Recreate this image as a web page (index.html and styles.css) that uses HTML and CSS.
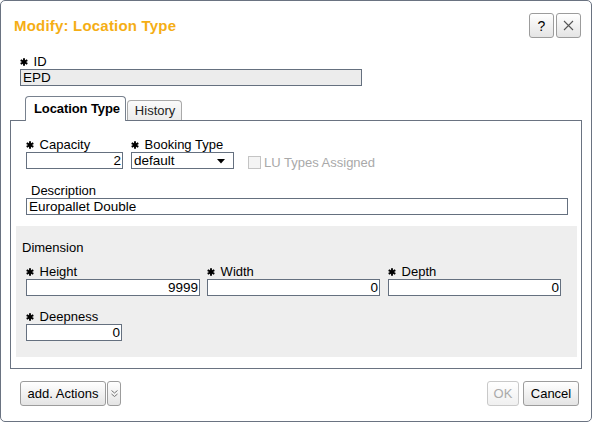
FILE: index.html
```html
<!DOCTYPE html>
<html>
<head>
<meta charset="utf-8">
<link rel="stylesheet" href="styles.css">
</head>
<body>
<div class="dialog">
  <div class="header">
    <div class="title">Modify: Location Type</div>
    <div class="hbtns">
      <button class="btn hbtn">?</button>
      <button class="btn hbtn"><svg width="11" height="11" viewBox="0 0 11 11"><path d="M1 1L10 10M10 1L1 10" stroke="#555" stroke-width="1.1"/></svg></button>
    </div>
  </div>
  <div class="body">
    <div class="idfield">
      <div class="label"><svg class="star" width="8" height="8" viewBox="0 0 8 8"><g stroke="#000" stroke-width="1.9"><path d="M4 0.2V7.8"/><path d="M0.7 2.1L7.3 5.9"/><path d="M0.7 5.9L7.3 2.1"/></g></svg> ID</div>
      <div class="input ro idinput">EPD</div>
    </div>
    <div class="tabs">
      <div class="tab active">Location Type</div>
      <div class="tab">History</div>
    </div>
    <div class="panel">
      <div class="row1">
        <div class="field">
          <div class="label"><svg class="star" width="8" height="8" viewBox="0 0 8 8"><g stroke="#000" stroke-width="1.9"><path d="M4 0.2V7.8"/><path d="M0.7 2.1L7.3 5.9"/><path d="M0.7 5.9L7.3 2.1"/></g></svg> Capacity</div>
          <div class="input num w-cap">2</div>
        </div>
        <div class="field">
          <div class="label"><svg class="star" width="8" height="8" viewBox="0 0 8 8"><g stroke="#000" stroke-width="1.9"><path d="M4 0.2V7.8"/><path d="M0.7 2.1L7.3 5.9"/><path d="M0.7 5.9L7.3 2.1"/></g></svg> Booking Type</div>
          <div class="input select">default<svg class="arrow" width="8" height="5" viewBox="0 0 8 5"><path d="M0 0H8L4 4.5Z" fill="#000"/></svg></div>
        </div>
        <div class="check">
          <span class="box"></span><span>LU Types Assigned</span>
        </div>
      </div>
      <div class="desc">
        <div class="label plain">Description</div>
        <div class="input descinput">Europallet Double</div>
      </div>
      <div class="dimension">
        <div class="label dimlabel">Dimension</div>
        <div class="dimrow">
          <div class="field">
            <div class="label"><svg class="star" width="8" height="8" viewBox="0 0 8 8"><g stroke="#000" stroke-width="1.9"><path d="M4 0.2V7.8"/><path d="M0.7 2.1L7.3 5.9"/><path d="M0.7 5.9L7.3 2.1"/></g></svg> Height</div>
            <div class="input num w-h">9999</div>
          </div>
          <div class="field f-width">
            <div class="label"><svg class="star" width="8" height="8" viewBox="0 0 8 8"><g stroke="#000" stroke-width="1.9"><path d="M4 0.2V7.8"/><path d="M0.7 2.1L7.3 5.9"/><path d="M0.7 5.9L7.3 2.1"/></g></svg> Width</div>
            <div class="input num w-w">0</div>
          </div>
          <div class="field f-depth">
            <div class="label"><svg class="star" width="8" height="8" viewBox="0 0 8 8"><g stroke="#000" stroke-width="1.9"><path d="M4 0.2V7.8"/><path d="M0.7 2.1L7.3 5.9"/><path d="M0.7 5.9L7.3 2.1"/></g></svg> Depth</div>
            <div class="input num w-w">0</div>
          </div>
        </div>
        <div class="dimrow second">
          <div class="field">
            <div class="label"><svg class="star" width="8" height="8" viewBox="0 0 8 8"><g stroke="#000" stroke-width="1.9"><path d="M4 0.2V7.8"/><path d="M0.7 2.1L7.3 5.9"/><path d="M0.7 5.9L7.3 2.1"/></g></svg> Deepness</div>
            <div class="input num w-deep">0</div>
          </div>
        </div>
      </div>
    </div>
  </div>
  <div class="footer">
    <div class="fleft">
      <button class="btn fbtn b-add">add. Actions</button>
      <button class="btn ddbtn"><svg width="7" height="9" viewBox="0 0 7 9"><path d="M0.5 1.5L3.5 4L6.5 1.5M0.5 5L3.5 7.5L6.5 5" fill="none" stroke="#666" stroke-width="0.9"/></svg></button>
    </div>
    <div class="fright">
      <button class="btn fbtn disabled">OK</button>
      <button class="btn fbtn b-cancel">Cancel</button>
    </div>
  </div>
</div>
</body>
</html>
```

FILE: styles.css
```css
html, body {
  margin: 0;
  padding: 0;
  background: #ffffff;
}
body {
  font-family: "Liberation Sans", Arial, sans-serif;
  font-size: 13px;
  color: #000;
}
.dialog {
  width: 592px;
  height: 422px;
  box-sizing: border-box;
  border: 1px solid #6a7381;
  border-radius: 5px;
  background: #fff;
  display: flex;
  flex-direction: column;
}
.header {
  display: flex;
  align-items: center;
  justify-content: space-between;
  padding: 12px 10px 0 13px;
  height: 25px;
}
.title {
  font-size: 15px;
  font-weight: bold;
  color: #f5ae15;
  line-height: 18px;
  letter-spacing: 0.2px;
}
.hbtns {
  display: flex;
  gap: 2px;
}
.btn {
  font-family: "Liberation Sans", Arial, sans-serif;
  font-size: 13px;
  color: #000;
  background: linear-gradient(#ffffff, #e4e4e4);
  border: 1px solid #9c9c9c;
  border-radius: 3px;
  padding: 0;
  margin: 0;
  box-sizing: border-box;
  display: flex;
  align-items: center;
  justify-content: center;
}
.hbtn {
  width: 25px;
  height: 25px;
  font-size: 14px;
}
.body {
  padding: 0 9px;
  flex: 1;
}
.label {
  line-height: 15px;
  height: 15px;
  white-space: nowrap;
}
.star {
  display: inline-block;
  vertical-align: 0px;
  margin-right: 2px;
}
.idfield {
  margin: 16px 0 0 10px;
}
.input {
  box-sizing: border-box;
  height: 17px;
  border: 1px solid #65707f;
  background: #fff;
  line-height: 15px;
  padding: 0 2px;
  white-space: nowrap;
  font-size: 13.5px;
}
.input.ro {
  background: #ececec;
}
.idinput {
  width: 342px;
}
.tabs {
  display: flex;
  align-items: flex-end;
  margin: 10px 0 0 15px;
  height: 24px;
  position: relative;
  z-index: 1;
}
.tab {
  box-sizing: border-box;
  height: 20px;
  padding: 0 6px 0 7px;
  line-height: 20px;
  border: 1px solid #a9a9a9;
  border-bottom: none;
  border-radius: 4px 4px 0 0;
  background: linear-gradient(#fafafa, #ececec);
  color: #222;
  margin-left: 1px;
}
.tab.active {
  height: 25px;
  margin-bottom: -1px;
  line-height: 24px;
  padding: 0 5px 0 8px;
  background: #fff;
  font-weight: bold;
  border-color: #78818e;
  color: #000;
  margin-left: 0;
  letter-spacing: -0.1px;
}
.panel {
  border: 1px solid #6a7381;
  padding: 16px 4px 11px 15px;
}
.row1 {
  display: flex;
  align-items: flex-end;
}
.field {
  display: flex;
  flex-direction: column;
}
.row1 .field + .field {
  margin-left: 8px;
}
.w-cap {
  width: 97px;
}
.num {
  text-align: right;
  padding-right: 1px;
}
.select {
  width: 103px;
  position: relative;
  padding-left: 2px;
}
.arrow {
  position: absolute;
  right: 8px;
  top: 6px;
}
.check {
  display: flex;
  align-items: center;
  margin-left: 14px;
  height: 17px;
  color: #a9a9a9;
  margin-bottom: -2px;
}
.check .box {
  box-sizing: border-box;
  width: 13px;
  height: 13px;
  border: 1px solid #c4c4c4;
  background: #f4f4f4;
  margin-right: 3px;
}
.desc {
  margin-top: 14px;
}
.label.plain {
  padding-left: 5px;
}
.descinput {
  width: 542px;
}
.dimension {
  background: #eeeeee;
  margin: 11px 0 0 -10px;
  padding: 14px 6px 16px 6px;
}
.dimlabel {
  margin-bottom: 9px;
}
.dimrow {
  display: flex;
  padding-left: 4px;
}
.dimrow.second {
  margin-top: 13px;
}
.w-h {
  width: 174px;
}
.w-w {
  width: 173px;
}
.f-width {
  margin-left: 7px;
}
.f-depth {
  margin-left: 8px;
}
.w-deep {
  width: 96px;
}
.footer {
  display: flex;
  justify-content: space-between;
  padding: 0 12px 15px 19px;
}
.fleft {
  display: flex;
  gap: 1px;
}
.fright {
  display: flex;
  gap: 4px;
}
.fbtn {
  height: 25px;
  padding: 0 6px;
}
.b-add {
  width: 86px;
}
.b-cancel {
  width: 56px;
}
.ddbtn {
  width: 14px;
  height: 25px;
}
.fbtn.disabled {
  color: #aaaaaa;
  border-color: #c9c9c9;
  background: linear-gradient(#ffffff, #f0f0f0);
  width: 32px;
}
```
